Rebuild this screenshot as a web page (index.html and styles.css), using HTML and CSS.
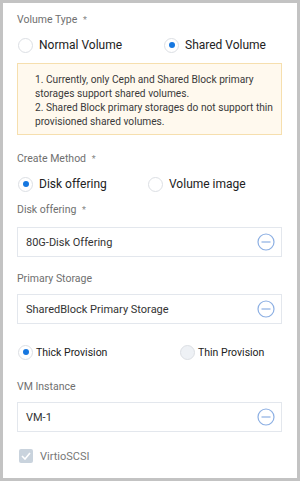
FILE: index.html
```html
<!DOCTYPE html>
<html lang="en">
<head>
  <meta charset="UTF-8" />
  <title>Create Volume</title>
  <link rel="stylesheet" href="styles.css">
</head>
<body>
  <div class="panel">
    <div class="label">Volume Type <span class="req">*</span></div>
    <div class="radio-row first">
      <label class="radio w-type"><span class="dot"></span>Normal Volume</label>
      <label class="radio on"><span class="dot"></span>Shared Volume</label>
    </div>

    <div class="notice">
      1. Currently, only Ceph and Shared Block primary storages support shared volumes.<br>
      2. Shared Block primary storages do not support thin provisioned shared volumes.
    </div>

    <div class="label method">Create Method <span class="req">*</span></div>
    <div class="radio-row">
      <label class="radio on w-method"><span class="dot"></span>Disk offering</label>
      <label class="radio"><span class="dot"></span>Volume image</label>
    </div>

    <div class="label offering">Disk offering <span class="req">*</span></div>
    <div class="field offering-field">
      <span>80G-Disk Offering</span>
      <svg class="clear" width="18" height="18" viewBox="0 0 18 18"><circle cx="9" cy="9" r="8" fill="none" stroke="#8cafe3" stroke-width="1.2"/><line x1="4.5" y1="9" x2="13.5" y2="9" stroke="#8cafe3" stroke-width="1.2"/></svg>
    </div>

    <div class="label storage">Primary Storage</div>
    <div class="field">
      <span>SharedBlock Primary Storage</span>
      <svg class="clear" width="18" height="18" viewBox="0 0 18 18"><circle cx="9" cy="9" r="8" fill="none" stroke="#8cafe3" stroke-width="1.2"/><line x1="4.5" y1="9" x2="13.5" y2="9" stroke="#8cafe3" stroke-width="1.2"/></svg>
    </div>

    <div class="radio-row small">
      <label class="radio on w-prov"><span class="dot"></span>Thick Provision</label>
      <label class="radio off"><span class="dot"></span>Thin Provision</label>
    </div>

    <div class="label vm">VM Instance</div>
    <div class="field">
      <span>VM-1</span>
      <svg class="clear" width="18" height="18" viewBox="0 0 18 18"><circle cx="9" cy="9" r="8" fill="none" stroke="#8cafe3" stroke-width="1.2"/><line x1="4.5" y1="9" x2="13.5" y2="9" stroke="#8cafe3" stroke-width="1.2"/></svg>
    </div>

    <label class="check">
      <span class="box"><svg width="10" height="8" viewBox="0 0 10 8"><path d="M1 4 L4 7 L9 1" fill="none" stroke="#fff" stroke-width="1.6"/></svg></span>
      VirtioSCSI
    </label>
  </div>
</body>
</html>
```

FILE: styles.css
```css
body {
  margin: 0;
  padding: 3px;
  background: #c3c3c3;
  font-family: Roboto, "Noto Sans", sans-serif;
  color: #333;
}

.panel {
  background: #fff;
  height: 475px;
  padding: 9px 15px 0 14px;
  box-sizing: border-box;
  display: flex;
  flex-direction: column;
}

.label {
  font-size: 10.5px;
  line-height: 16px;
  color: #6f6f6f;
  white-space: nowrap;
}

.req {
  color: #888;
  font-size: 9px;
  margin-left: 3px;
}

.radio-row {
  display: flex;
  height: 20px;
  align-items: center;
  margin-top: 7px;
}

.radio {
  display: flex;
  align-items: center;
  font-size: 12px;
  color: #222;
  white-space: nowrap;
  flex-shrink: 0;
}

.radio .dot {
  width: 15px;
  height: 15px;
  border: 1px solid #dcdfe4;
  border-radius: 50%;
  margin: 0 6px 0 1px;
  box-sizing: border-box;
  position: relative;
  background: #fff;
}

.radio.on .dot::after {
  content: "";
  position: absolute;
  left: 3.5px;
  top: 3.5px;
  width: 6px;
  height: 6px;
  border-radius: 50%;
  background: #1677e0;
}

.radio.off .dot {
  background: #eef1f5;
}

.w-type {
  width: 146px;
}

.w-method {
  width: 130px;
}

.w-prov {
  width: 162px;
}

.notice {
  margin-top: 8px;
  height: 72px;
  box-sizing: border-box;
  border: 1px solid #f6dfae;
  background: #fff9ee;
  padding: 9px 0 0 17px;
  font-size: 10.2px;
  line-height: 14px;
  color: #3a3a3a;
}

.method {
  margin-top: 16px;
}

.offering {
  margin-top: 8px;
}

.field {
  margin-top: 7px;
  height: 30px;
  box-sizing: border-box;
  border: 1px solid #e3e7ed;
  padding: 0 6px 0 8px;
  display: flex;
  align-items: center;
  justify-content: space-between;
  font-size: 11px;
  color: #333;
}

.offering-field {
  margin-top: 9px;
}

.storage {
  margin-top: 14px;
}

.radio-row.small {
  margin-top: 18px;
}

.radio-row.small .radio {
  font-size: 10.5px;
}

.radio-row.small .dot {
  margin-right: 3px;
}

.vm {
  margin-top: 17px;
}

.check {
  margin-top: 17px;
  display: flex;
  align-items: center;
  font-size: 11px;
  color: #777;
  gap: 7px;
}

.check .box {
  width: 14px;
  height: 14px;
  margin-left: 2px;
  background: #c9d3dd;
  border-radius: 2px;
  display: flex;
  align-items: center;
  justify-content: center;
}
```
